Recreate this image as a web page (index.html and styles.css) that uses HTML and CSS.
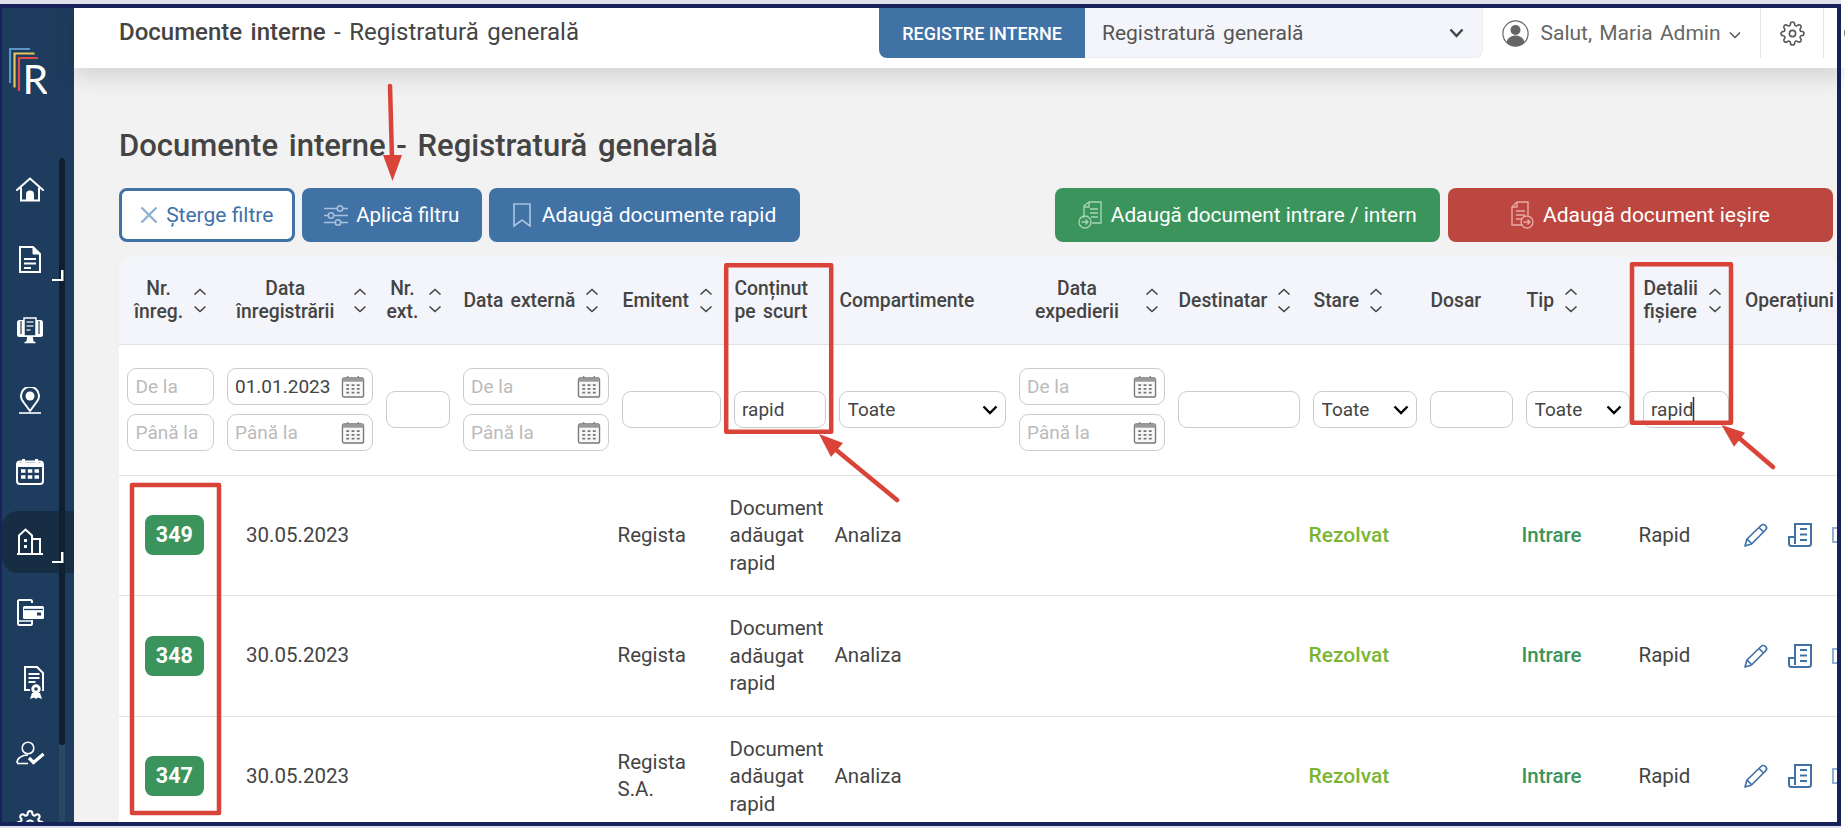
FILE: index.html
```html
<!DOCTYPE html>
<html lang="ro">
<head>
<meta charset="utf-8">
<title>Documente interne - Registratură generală</title>
<link rel="stylesheet" href="styles.css">
</head>
<body>
<svg class="defs" width="0" height="0" aria-hidden="true">
  <symbol id="cal" viewBox="0 0 24 24"><path d="M6.500 1v4M17.500 1v4" fill="none" stroke="#777" stroke-width="1.300"/><rect x="1" y="3" width="22" height="20" rx="2" fill="#f7f7f7" stroke="#777" stroke-width="1.400"/><rect x="1" y="3" width="22" height="4" fill="#999"/><path d="M5 10.500h3M10.500 10.500h3M16 10.500h3M5 14.500h3M10.500 14.500h3M16 14.500h3M5 18.500h3M10.500 18.500h3M16 18.500h3" stroke="#777" stroke-width="1.800"/></symbol>
  <symbol id="up" viewBox="0 0 14 8"><path d="M1.500 6.500 7 1.500l5.500 5" fill="none" stroke="#444" stroke-width="1.600"/></symbol>
  <symbol id="down" viewBox="0 0 14 8"><path d="M1.500 1.500 7 6.500l5.500-5" fill="none" stroke="#444" stroke-width="1.600"/></symbol>
  <symbol id="pencil" viewBox="0 0 24 24"><path d="M1 23l2-7L17 2.500a3.100 3.100 0 0 1 4.500 4.500L7.500 21zM15 4.500l4.500 4.500M3 16l5 5" fill="none" stroke="#4072a6" stroke-width="1.700" stroke-linejoin="round"/></symbol>
  <symbol id="news" viewBox="0 0 24 24"><path d="M7 16V1h16v19.500a2.500 2.500 0 0 1-2.500 2.500h-17A2.500 2.500 0 0 1 1 20.500V14h6v7" fill="none" stroke="#4072a6" stroke-width="2"/><path d="M12 6h7M12 11.500h7M12 17h7" stroke="#4072a6" stroke-width="2"/></symbol>
  <symbol id="third" viewBox="0 0 24 16"><path d="M1 1h22v14H1z" fill="none" stroke="#8fb0d0" stroke-width="2"/></symbol>
  <symbol id="gear" viewBox="0 0 24 24"><circle cx="12" cy="12" r="3"/><path d="M19.400 15a1.650 1.650 0 0 0 .33 1.820l.06.06a2 2 0 0 1 0 2.830 2 2 0 0 1-2.830 0l-.06-.06a1.650 1.650 0 0 0-1.820-.33 1.650 1.650 0 0 0-1 1.510V21a2 2 0 0 1-2 2 2 2 0 0 1-2-2v-.09A1.650 1.650 0 0 0 9 19.400a1.650 1.650 0 0 0-1.820.33l-.06.06a2 2 0 0 1-2.830 0 2 2 0 0 1 0-2.830l.06-.06a1.650 1.650 0 0 0 .33-1.820 1.650 1.650 0 0 0-1.510-1H3a2 2 0 0 1-2-2 2 2 0 0 1 2-2h.09A1.650 1.650 0 0 0 4.600 9a1.650 1.650 0 0 0-.33-1.820l-.06-.06a2 2 0 0 1 0-2.830 2 2 0 0 1 2.830 0l.06.06a1.650 1.650 0 0 0 1.820.33H9a1.650 1.650 0 0 0 1-1.510V3a2 2 0 0 1 2-2 2 2 0 0 1 2 2v.09a1.650 1.650 0 0 0 1 1.510 1.650 1.650 0 0 0 1.820-.33l.06-.06a2 2 0 0 1 2.830 0 2 2 0 0 1 0 2.830l-.06.06a1.650 1.650 0 0 0-.33 1.820V9a1.650 1.650 0 0 0 1.510 1H21a2 2 0 0 1 2 2 2 2 0 0 1-2 2h-.09a1.650 1.650 0 0 0-1.510 1z"/></symbol>
</svg>

<div class="app">
  <aside class="sidebar">
    <svg class="logo" width="38" height="56" viewBox="0 0 38 56">
      <path d="M1 35V1h20" fill="none" stroke="#5b94c7" stroke-width="2.200"/>
      <path d="M5.500 39.500V5.500h20" fill="none" stroke="#e8c55a" stroke-width="2.200"/>
      <path d="M10 43V10h19" fill="none" stroke="#e04a4a" stroke-width="2.200"/>
      <text x="13.500" y="46" class="logo-r">R</text>
    </svg>
    <div class="scroll-track"><div class="scroll-thumb"></div></div>
    <nav class="nav">
      <a class="nav-item"><svg width="28" height="25" viewBox="0 0 28 25"><path d="M1 13 14 1.500 27 13" fill="none" stroke="#fff" stroke-width="2" stroke-linecap="round"/><path d="M5 10.500V23.500H23V10.500" fill="none" stroke="#fff" stroke-width="2"/><path d="M10 23.500V17.500a4 4 0 0 1 8 0v6z" fill="#fff"/></svg></a>
      <a class="nav-item has-sub"><svg width="22" height="27" viewBox="0 0 22 27"><path d="M1 1h13l7 7v18H1z" fill="none" stroke="#fff" stroke-width="2"/><path d="M14 1v7h7" fill="#fff" stroke="#fff"/><path d="M5 13h12M5 17.500h12M5 22h7" stroke="#fff" stroke-width="2"/></svg></a>
      <a class="nav-item"><svg width="28" height="27" viewBox="0 0 28 27"><rect x="1" y="3" width="26" height="17" rx="2.500" fill="#fff"/><rect x="8" y="1" width="12" height="18" fill="#1e3d5e" stroke="#fff" stroke-width="1.500"/><path d="M10.500 5h7M10.500 9h7M10.500 13h4" stroke="#cfd6dd" stroke-width="1.600"/><path d="M5 4v13M23 4v13" stroke="#1e3d5e" stroke-width="1.200"/><path d="M12 20l-.8 4H16.800L16 20zM8.500 25.500h11" fill="#fff" stroke="#fff" stroke-width="1.500"/></svg></a>
      <a class="nav-item"><svg width="24" height="27" viewBox="0 0 24 27"><path d="M12 24 5 14.500a9 9 0 1 1 14 0z" fill="none" stroke="#fff" stroke-width="2" stroke-linejoin="round"/><circle cx="12" cy="9" r="4.500" fill="#fff"/><path d="M1 26h22" stroke="#fff" stroke-width="1.600"/></svg></a>
      <a class="nav-item"><svg width="28" height="27" viewBox="0 0 28 27"><rect x="1" y="3.500" width="26" height="22.500" rx="3" fill="none" stroke="#fff" stroke-width="2"/><path d="M1 4.500h26V9H1z" fill="#fff"/><rect x="6" y="1" width="3" height="5" fill="#fff"/><rect x="19" y="1" width="3" height="5" fill="#fff"/><path d="M5 13h4.500M11.800 13h4.500M18.500 13h4.500M5 19h4.500M11.800 19h4.500M18.500 19h4.500" stroke="#fff" stroke-width="3.600"/></svg></a>
      <a class="nav-item active has-sub"><svg width="28" height="27" viewBox="0 0 28 27"><path d="M1 26h26" stroke="#fff" stroke-width="2"/><path d="M3 26V7.500L9.500 1.500l6.500 6V26" fill="none" stroke="#fff" stroke-width="2"/><path d="M16 11h8V26" fill="none" stroke="#fff" stroke-width="2"/><path d="M8 11h3v3H8zM8 17h3v3H8z" fill="#fff"/></svg></a>
      <a class="nav-item"><svg width="27" height="27" viewBox="0 0 27 27"><path d="M15 4V2.500A1.500 1.500 0 0 0 13.500 1h-11A1.500 1.500 0 0 0 1 2.500v22A1.500 1.500 0 0 0 2.500 26h11a1.500 1.500 0 0 0 1.500-1.500V21" fill="none" stroke="#fff" stroke-width="2"/><path d="M1 22h14" stroke="#fff" stroke-width="1.500"/><rect x="6" y="7" width="21" height="13" rx="1.500" fill="#fff"/><path d="M7 10.500h19" stroke="#1e3d5e" stroke-width="1.300"/><rect x="20" y="13.500" width="4" height="3" fill="#1e3d5e"/></svg></a>
      <a class="nav-item shifted"><svg width="20" height="33" viewBox="0 0 20 33"><path d="M1 1h12l6 6v17H1z" fill="none" stroke="#fff" stroke-width="2"/><path d="M4.500 8h11M4.500 12h11M4.500 16h7" stroke="#fff" stroke-width="1.800"/><circle cx="12" cy="23" r="5.500" fill="#fff" stroke="#1e3d5e" stroke-width="1.500"/><circle cx="12" cy="23" r="1.800" fill="#1e3d5e"/><path d="M8 27l-2 6 4-1.500L12 33l2-1.500 4 1.500-2-6" fill="#fff"/></svg></a>
      <a class="nav-item"><svg width="29" height="24" viewBox="0 0 29 24"><circle cx="12" cy="7" r="5.800" fill="none" stroke="#fff" stroke-width="1.600"/><path d="M1 22c0-5 5-8 11-8" fill="none" stroke="#fff" stroke-width="1.600"/><path d="M1 22.500h11" stroke="#fff" stroke-width="1.600"/><path d="M13 17l4.500 4.500L27.500 13" fill="none" stroke="#fff" stroke-width="3.200"/></svg></a>
      <a class="nav-item"><svg class="nav-gear" width="28" height="28" viewBox="0 0 24 24"><use href="#gear"/></svg></a>
    </nav>
  </aside>

  <div class="content">
    <header class="topbar">
      <div class="crumb"><strong>Documente interne</strong> - Registratură generală</div>
      <div class="top-right">
        <div class="tab">REGISTRE INTERNE</div>
        <div class="reg-select"><span>Registratură generală</span><svg width="15" height="10" viewBox="0 0 15 10"><path d="M1.500 1.500 7.500 8l6-6.500" fill="none" stroke="#444" stroke-width="2.400"/></svg></div>
        <div class="user">
          <svg width="27" height="27" viewBox="0 0 27 27"><circle cx="13.500" cy="13.500" r="12.600" fill="none" stroke="#666" stroke-width="1.200"/><circle cx="13.500" cy="10" r="5" fill="#666"/><path d="M4.500 22.500c1-5 5-7 9-7s8 2 9 7a12.600 12.600 0 0 1-18 0z" fill="#666"/></svg>
          <span>Salut, Maria Admin</span>
          <svg width="12" height="8" viewBox="0 0 12 8"><path d="M1 1.500 6 6.500l5-5" fill="none" stroke="#555" stroke-width="1.500"/></svg>
        </div>
        <div class="top-gear"><svg class="gear-ico" width="25" height="25" viewBox="0 0 24 24"><use href="#gear"/></svg></div>
        <div class="top-extra"><svg width="26" height="26" viewBox="0 0 26 26"><circle cx="13" cy="13" r="11" fill="none" stroke="#555" stroke-width="1.500"/></svg></div>
      </div>
    </header>

    <main class="main">
      <h1 class="page-title">Documente interne - Registratură generală</h1>
      <div class="toolbar">
        <div class="btn-group">
          <button class="btn btn-clear"><svg width="18" height="18" viewBox="0 0 18 18"><path d="M1.500 1.500l15 15M16.500 1.500l-15 15" stroke="#8fb0d0" stroke-width="2.400"/></svg>Șterge filtre</button>
          <button class="btn btn-blue btn-apply"><svg width="24" height="21" viewBox="0 0 24 21"><g fill="none" stroke="#a9c2da" stroke-width="1.600"><path d="M0 3.500h13M19 3.500h5M0 10.500h4M10 10.500h14M0 17.500h11M17 17.500h7"/><circle cx="16" cy="3.500" r="2.700"/><circle cx="7" cy="10.500" r="2.700"/><circle cx="14" cy="17.500" r="2.700"/></g></svg>Aplică filtru</button>
          <button class="btn btn-blue btn-quick"><svg width="18" height="24" viewBox="0 0 18 24"><path d="M1 1h16v22l-8-6-8 6z" fill="none" stroke="#a9c2da" stroke-width="1.700"/></svg>Adaugă documente rapid</button>
        </div>
        <div class="btn-group">
          <button class="btn btn-green"><svg width="24" height="28" viewBox="0 0 24 28"><g fill="none" stroke="#a6d3b6" stroke-width="1.400"><path d="M6 17V5l5-4h12v21H14"/><path d="M11 1v5H6M12 8h8M12 12h8M13 16h7"/><circle cx="7" cy="21" r="6"/><path d="M3.500 21h6.500M7.500 18.500 10 21l-2.500 2.500"/></g></svg>Adaugă document intrare / intern</button>
          <button class="btn btn-red"><svg width="24" height="28" viewBox="0 0 24 28"><g fill="none" stroke="#e8aaa5" stroke-width="1.400"><path d="M13 24H2V6l5-5h11v13"/><path d="M7 1v5H2M6 10h9M6 14h9M6 18h6"/><circle cx="17" cy="21" r="6"/><path d="M13.500 21h6.500M17.500 18.500 20 21l-2.500 2.500"/></g></svg>Adaugă document ieșire</button>
        </div>
      </div>

      <section class="card">
        <table class="grid">
          <colgroup>
            <col class="w1"><col class="w2"><col class="w3"><col class="w4"><col class="w5"><col class="w6"><col class="w7"><col class="w8"><col class="w9"><col class="w10"><col class="w11"><col class="w12"><col class="w13"><col class="w14">
          </colgroup>
          <thead>
            <tr class="head">
              <th class="pad-15"><div class="hd"><span class="center">Nr.<br>înreg.</span><span class="sort"><svg width="14" height="8"><use href="#up"/></svg><svg width="14" height="8"><use href="#down"/></svg></span></div></th>
              <th class="pad-16"><div class="hd gap-19"><span class="center">Data<br>înregistrării</span><span class="sort"><svg width="14" height="8"><use href="#up"/></svg><svg width="14" height="8"><use href="#down"/></svg></span></div></th>
              <th><div class="hd"><span class="center">Nr.<br>ext.</span><span class="sort"><svg width="14" height="8"><use href="#up"/></svg><svg width="14" height="8"><use href="#down"/></svg></span></div></th>
              <th><div class="hd"><span>Data externă</span><span class="sort"><svg width="14" height="8"><use href="#up"/></svg><svg width="14" height="8"><use href="#down"/></svg></span></div></th>
              <th><div class="hd"><span>Emitent</span><span class="sort"><svg width="14" height="8"><use href="#up"/></svg><svg width="14" height="8"><use href="#down"/></svg></span></div></th>
              <th><div class="hd"><span>Conținut<br>pe scurt</span></div></th>
              <th><div class="hd"><span>Compartimente</span></div></th>
              <th class="pad-23"><div class="hd gap-26"><span class="center">Data<br>expedierii</span><span class="sort"><svg width="14" height="8"><use href="#up"/></svg><svg width="14" height="8"><use href="#down"/></svg></span></div></th>
              <th><div class="hd"><span>Destinatar</span><span class="sort"><svg width="14" height="8"><use href="#up"/></svg><svg width="14" height="8"><use href="#down"/></svg></span></div></th>
              <th><div class="hd"><span>Stare</span><span class="sort"><svg width="14" height="8"><use href="#up"/></svg><svg width="14" height="8"><use href="#down"/></svg></span></div></th>
              <th><div class="hd"><span>Dosar</span></div></th>
              <th><div class="hd"><span>Tip</span><span class="sort"><svg width="14" height="8"><use href="#up"/></svg><svg width="14" height="8"><use href="#down"/></svg></span></div></th>
              <th><div class="hd"><span>Detalii<br>fișiere</span><span class="sort"><svg width="14" height="8"><use href="#up"/></svg><svg width="14" height="8"><use href="#down"/></svg></span></div></th>
              <th class="pad-10"><div class="hd"><span>Operațiuni</span></div></th>
            </tr>
            <tr class="filters">
              <td class="f-first"><div class="stack"><input class="inp" placeholder="De la"><input class="inp" placeholder="Până la"></div></td>
              <td><div class="stack"><label class="date"><input value="01.01.2023"><svg width="24" height="23"><use href="#cal"/></svg></label><label class="date"><input placeholder="Până la"><svg width="24" height="23"><use href="#cal"/></svg></label></div></td>
              <td><input class="inp"></td>
              <td><div class="stack"><label class="date"><input placeholder="De la"><svg width="24" height="23"><use href="#cal"/></svg></label><label class="date"><input placeholder="Până la"><svg width="24" height="23"><use href="#cal"/></svg></label></div></td>
              <td><input class="inp"></td>
              <td><input class="inp" value="rapid"></td>
              <td><select class="sel"><option>Toate</option></select></td>
              <td><div class="stack"><label class="date"><input placeholder="De la"><svg width="24" height="23"><use href="#cal"/></svg></label><label class="date"><input placeholder="Până la"><svg width="24" height="23"><use href="#cal"/></svg></label></div></td>
              <td><input class="inp"></td>
              <td><select class="sel"><option>Toate</option></select></td>
              <td><input class="inp"></td>
              <td><select class="sel"><option>Toate</option></select></td>
              <td><input class="inp" value="rapid"></td>
              <td></td>
            </tr>
          </thead>
          <tbody>
            <tr>
              <td class="c-num"><span class="badge">349</span></td>
              <td class="c-date">30.05.2023</td><td></td><td></td>
              <td>Regista</td>
              <td class="c-doc">Document<br>adăugat<br>rapid</td>
              <td>Analiza</td><td></td><td></td>
              <td class="st-ok">Rezolvat</td><td></td>
              <td class="st-in">Intrare</td>
              <td>Rapid</td>
              <td><div class="ops"><svg width="24" height="24"><use href="#pencil"/></svg><svg width="24" height="24"><use href="#news"/></svg><svg width="24" height="16"><use href="#third"/></svg></div></td>
            </tr>
            <tr>
              <td class="c-num"><span class="badge">348</span></td>
              <td class="c-date">30.05.2023</td><td></td><td></td>
              <td>Regista</td>
              <td class="c-doc">Document<br>adăugat<br>rapid</td>
              <td>Analiza</td><td></td><td></td>
              <td class="st-ok">Rezolvat</td><td></td>
              <td class="st-in">Intrare</td>
              <td>Rapid</td>
              <td><div class="ops"><svg width="24" height="24"><use href="#pencil"/></svg><svg width="24" height="24"><use href="#news"/></svg><svg width="24" height="16"><use href="#third"/></svg></div></td>
            </tr>
            <tr>
              <td class="c-num"><span class="badge">347</span></td>
              <td class="c-date">30.05.2023</td><td></td><td></td>
              <td>Regista<br>S.A.</td>
              <td class="c-doc">Document<br>adăugat<br>rapid</td>
              <td>Analiza</td><td></td><td></td>
              <td class="st-ok">Rezolvat</td><td></td>
              <td class="st-in">Intrare</td>
              <td>Rapid</td>
              <td><div class="ops"><svg width="24" height="24"><use href="#pencil"/></svg><svg width="24" height="24"><use href="#news"/></svg><svg width="24" height="16"><use href="#third"/></svg></div></td>
            </tr>
          </tbody>
        </table>
      </section>
    </main>
  </div>
</div>

<svg class="annot" width="1845" height="828" viewBox="0 0 1845 828" aria-hidden="true">
  <g fill="none" stroke="#d94338" stroke-width="4.500" stroke-linejoin="round">
    <rect x="726.200" y="265.200" width="105" height="166.500"/>
    <rect x="1632" y="264.200" width="99" height="158.500"/>
    <rect x="132" y="485" width="87" height="328"/>
    <path d="M390 86 392 158M897 500 835 449M1773 467 1738 437" stroke-width="4.500" stroke-linecap="round"/>
  </g>
  <g fill="#d94338">
    <path d="M383 155h19l-9.500 26z"/>
    <path d="M819 434l24 9-12 14z"/>
    <path d="M1721.500 425l23.500 7.700-11 14z"/>
  </g>
  <path d="M1693.500 397v24" stroke="#333" stroke-width="1.500"/>
</svg>
<div class="frame"></div>
</body>
</html>
```
FILE: styles.css
```css
* { box-sizing: border-box; }
html, body { margin: 0; padding: 0; }
body {
  width: 1845px;
  height: 828px;
  overflow: hidden;
  background: #fff;
  font-family: Roboto, "Liberation Sans", sans-serif;
  color: #444;
  position: relative;
}
.defs { position: absolute; }

.app { display: flex; width: 1845px; height: 828px; }

/* sidebar */
.sidebar {
  position: relative;
  flex: none;
  width: 74px;
  height: 828px;
  padding: 48px 0 0 2px;
  background: #1e3d5e;
  overflow: hidden;
}
.logo { display: block; margin-left: 7px; }
.logo-r { font-family: Lato, "Liberation Sans", sans-serif; font-size: 41px; fill: #fff; }
.nav { position: relative; display: flex; flex-direction: column; gap: 8px; margin-top: 54px; }
.nav-item {
  position: relative;
  flex: none;
  display: flex;
  align-items: center;
  justify-content: center;
  width: 72px;
  height: 62.500px;
  padding-right: 16px;
}
.nav-item.shifted { padding-right: 8px; }
.nav-item.active { background: rgba(20, 36, 54, .62); border-radius: 16px 0 0 16px; }
.nav-item.has-sub::after {
  content: "";
  position: absolute;
  left: 50px;
  top: 41px;
  width: 9px;
  height: 9px;
  border-right: 2px solid #fff;
  border-bottom: 2px solid #fff;
  box-shadow: 1px 0 0 rgba(240, 160, 48, .75);
}
.nav-gear { fill: none; stroke: #fff; stroke-width: 1.800; }
.scroll-track { position: absolute; left: 59px; top: 158px; bottom: 0; width: 6px; background: #2a4763; border-radius: 3px; }
.scroll-thumb { height: 587px; background: #0f1f2d; border-radius: 3px; }

/* top bar */
.content { flex: 1; min-width: 0; display: flex; flex-direction: column; }
.topbar {
  position: relative;
  z-index: 2;
  flex: none;
  display: flex;
  justify-content: space-between;
  height: 68px;
  padding-left: 45px;
  background: #fff;
  box-shadow: 0 8px 24px rgba(0, 0, 0, .14);
}
.crumb { padding-top: 18px; font-size: 24px; line-height: 28px; color: #444; word-spacing: 2.500px; }
.crumb strong { font-weight: 500; }
.top-right { display: flex; height: 58px; }
.tab {
  width: 206px;
  height: 58px;
  padding-top: 8px;
  display: flex;
  align-items: center;
  justify-content: center;
  background: #4072a6;
  color: #fff;
  font-size: 18px;
  font-weight: 500;
  border-radius: 0 0 0 8px;
}
.reg-select {
  width: 397.500px;
  height: 58px;
  padding: 8px 18px 0 17px;
  display: flex;
  align-items: center;
  justify-content: space-between;
  background: #f4f5fa;
  border: 1px solid #ececf2;
  border-width: 0 1px 1px 0;
  border-radius: 0 0 8px 0;
  font-size: 21px;
  color: #555;
  word-spacing: 2.500px;
}
.user {
  width: 277.500px;
  padding: 8px 0 0 19px;
  display: flex;
  align-items: center;
  gap: 12px;
  font-size: 21px;
  color: #666;
  word-spacing: 2px;
}
.user > svg:last-child { margin-left: -4px; margin-top: 3px; }
.top-gear {
  width: 64px;
  padding-top: 8px;
  display: flex;
  align-items: center;
  justify-content: center;
  border-left: 1px solid #e5e5e5;
  border-right: 1px solid #e5e5e5;
}
.gear-ico { fill: none; stroke: #555; stroke-width: 1.500; }
.top-extra { width: 21px; padding-top: 8px; display: flex; align-items: center; justify-content: flex-end; overflow: hidden; }
.top-extra svg { flex: none; margin-right: -24px; }

/* main */
.main {
  flex: 1;
  min-height: 0;
  margin-right: 4px;
  padding: 0 8.500px 0 45px;
  background: #f2f2f2;
  overflow: hidden;
}
.page-title {
  margin: 58px 0 22px;
  font-size: 31px;
  line-height: 40px;
  font-weight: 500;
  color: #444;
  word-spacing: 3px;
}
.toolbar { display: flex; justify-content: space-between; height: 54px; margin-bottom: 15px; }
.btn-group { display: flex; gap: 7.500px; }
.btn {
  display: flex;
  align-items: center;
  justify-content: center;
  height: 54px;
  padding: 0;
  border: 0;
  border-radius: 8px;
  font-family: inherit;
  font-size: 21px;
  color: #fff;
}
.btn-clear { width: 175.500px; gap: 8px; background: #fff; border: 3px solid #4072a6; color: #4072a6; }
.btn-blue { background: #4072a6; }
.btn-apply { width: 179.500px; gap: 8px; font-size: 20.500px; }
.btn-quick { width: 311px; gap: 11px; }
.btn-green { width: 385.500px; gap: 9px; background: #3a945b; font-size: 20.800px; }
.btn-red { width: 385px; gap: 9px; background: #bb4740; }

/* table */
.card {
  margin-right: -6.500px;
  height: 600px;
  background: #fff;
  border-radius: 14px 14px 0 0;
  overflow: hidden;
}
.grid { table-layout: fixed; width: 1742px; border-collapse: collapse; font-size: 20.500px; color: #444; }
.w1 { width: 101px; } .w2 { width: 159px; } .w3 { width: 77px; } .w4 { width: 159px; }
.w5 { width: 112px; } .w6 { width: 105px; } .w7 { width: 180px; } .w8 { width: 159px; }
.w9 { width: 135px; } .w10 { width: 117px; } .w11 { width: 96px; } .w12 { width: 117px; }
.w13 { width: 99px; } .w14 { width: 126px; }

.head { height: 87px; background: #f4f5fa; border-bottom: 1px solid #e2e2e2; }
.head th { padding: 0 0 0 7.500px; font-size: 19.300px; font-weight: 500; line-height: 23px; text-align: left; white-space: nowrap; word-spacing: 2.500px; }
.head th.pad-15 { padding-left: 15px; }
.head th.pad-16 { padding-left: 16px; }
.head th.pad-23 { padding-left: 23px; }
.head th.pad-10 { padding-left: 10px; }
.hd { display: flex; align-items: center; gap: 10px; }
.hd.gap-19 { gap: 19px; }
.hd.gap-26 { gap: 26px; }
.center { text-align: center; }
.sort { flex: none; display: flex; flex-direction: column; gap: 9px; }
.sort svg { display: block; }

.filters { height: 131px; border-bottom: 1px solid #e2e2e2; }
.filters td { padding: 0 6.500px; }
.filters td.f-first { padding-left: 8px; }
.stack { display: flex; flex-direction: column; gap: 9px; }
.inp, .sel, .date {
  display: flex;
  width: 100%;
  height: 37px;
  border: 1px solid #ccc;
  border-radius: 9px;
  background: #fff;
  font-family: inherit;
  font-size: 19px;
  color: #444;
}
.inp { padding: 0 7.500px; }
.sel {
  padding: 0 24px 0 8px;
  appearance: none;
  background: #fff url("data:image/svg+xml,%3Csvg xmlns='http://www.w3.org/2000/svg' width='16' height='10' viewBox='0 0 16 10'%3E%3Cpath d='M1.500 1.500 8 8l6.500-6.500' fill='none' stroke='%23000' stroke-width='2.400'/%3E%3C/svg%3E") no-repeat right 6.500px center;
}
.date { align-items: center; padding: 0 7px 0 7.500px; }
.date input { flex: 1; min-width: 0; padding: 0; border: 0; outline: 0; background: none; font: inherit; color: inherit; }
.date svg { flex: none; }
input::placeholder { color: #bbb; opacity: 1; }

tbody tr { height: 120.500px; border-bottom: 1px solid #e2e2e2; }
tbody td { padding: 0 0 0 2.500px; line-height: 27.500px; white-space: nowrap; }
tbody td.c-num, tbody td.c-date { padding-left: 26px; }
tbody td.c-doc { padding-top: 1px; }
.badge {
  display: block;
  width: 58.700px;
  height: 40px;
  border-radius: 8px;
  background: #3a945b;
  color: #fff;
  font-size: 21.500px;
  font-weight: 700;
  line-height: 40px;
  text-align: center;
}
.st-ok { color: #7ab534; font-weight: 500; font-size: 21px; }
.st-in { color: #3a945b; font-weight: 500; }
.ops { display: flex; align-items: center; gap: 20px; padding-left: 6.500px; }
.ops svg { flex: none; }

/* annotations drawn on top of the screenshot */
.annot { position: absolute; left: 0; top: 0; z-index: 5; pointer-events: none; }
.frame {
  position: absolute;
  left: 0;
  top: 4px;
  z-index: 6;
  width: 1841px;
  height: 822px;
  border: 4px solid #18215a;
  border-left-width: 2px;
  box-shadow: 0 -4px 0 #dde0ea, 0 2px 0 #dde0ea;
  pointer-events: none;
}
```
